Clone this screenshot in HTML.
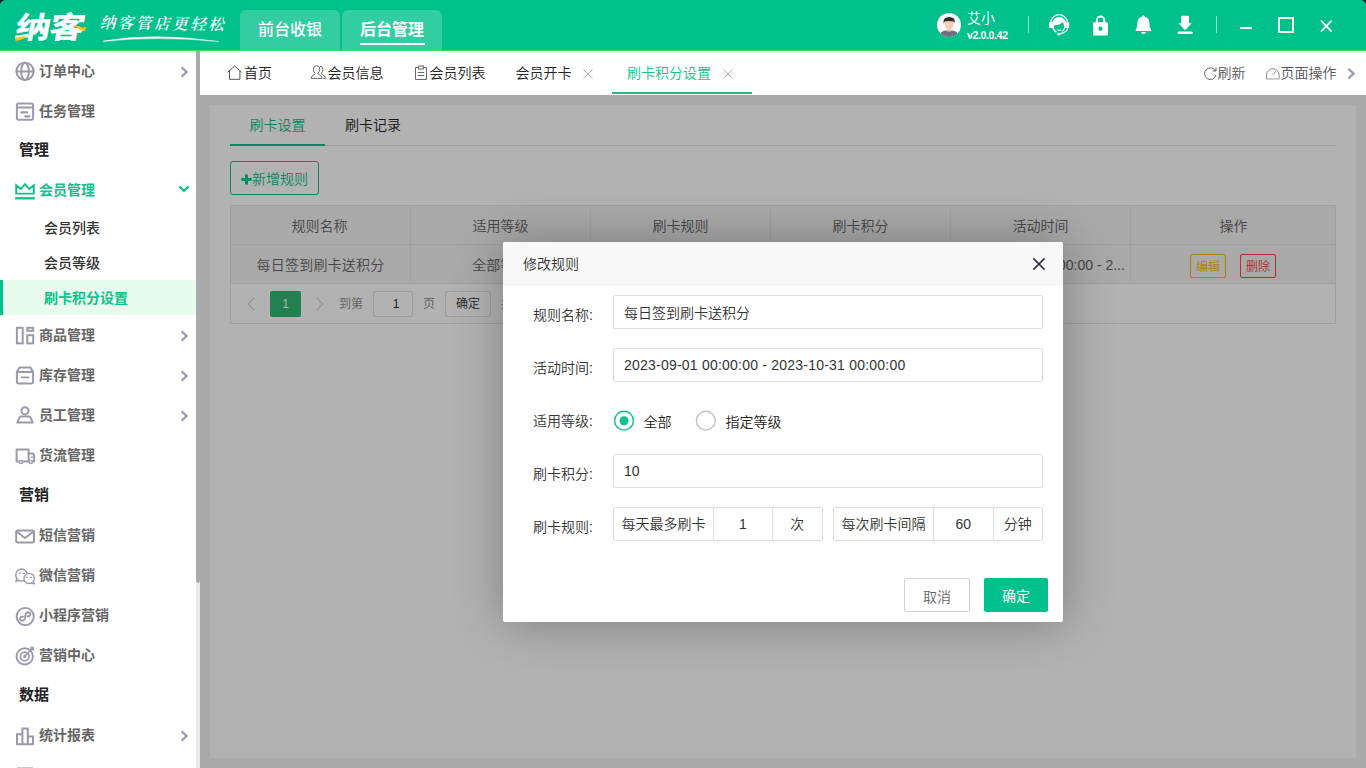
<!DOCTYPE html>
<html lang="zh-CN">
<head>
<meta charset="utf-8">
<title>纳客 - 刷卡积分设置</title>
<style>
*{box-sizing:border-box;margin:0;padding:0}
html,body{width:1366px;height:768px;overflow:hidden;background:#fff}
body{font-family:"Liberation Sans","Noto Sans CJK SC",sans-serif;font-size:14px;font-weight:350;color:#333;position:relative}
.abs{position:absolute}
/* ---------- header ---------- */
#hd{position:absolute;left:0;top:0;width:1366px;height:50px;background:#00c08b}
#hdline{position:absolute;left:0;top:50px;width:1366px;height:1px;background:#3fd673}
.corner{position:absolute;width:0;height:0}
.ntab{position:absolute;top:10px;height:40px;width:100px;background:#33cda2;border-radius:6px 6px 0 0;color:#fff;font-size:16px;line-height:40px;text-align:center}
/* ---------- sidebar ---------- */
#side{position:absolute;left:0;top:51px;width:196px;height:717px;background:#fff;overflow:hidden}
.mi{position:absolute;left:0;width:196px;height:40px;line-height:40px;font-size:14px;font-weight:700;color:#666}
.mi span{position:absolute;left:39px;top:0}
.mi svg.ic{position:absolute;left:14px;top:9px;width:22px;height:22px}
.mi svg.ar{position:absolute;left:179px;top:14.6px;width:10px;height:12px}
.grp{position:absolute;left:19px;font-size:15px;font-weight:700;color:#222;height:40px;line-height:40px}
.sub{position:absolute;left:0;width:196px;height:35px;line-height:36px;font-size:14px;font-weight:500;color:#333}
.sub span{position:absolute;left:44px}
#sbar{position:absolute;left:196px;top:51px;width:4px;height:717px;background:#e9e9e9}
#sthumb{position:absolute;left:0;top:0;width:4px;height:532px;background:#ababab;border-radius:0 0 2px 2px}
/* ---------- tab bar ---------- */
#tabs{position:absolute;left:200px;top:51px;width:1166px;height:44px;background:#fff}
.tb{position:absolute;top:0;height:44px;line-height:44px;font-size:14px;color:#222;white-space:nowrap}
/* ---------- content ---------- */
#content{position:absolute;left:200px;top:95px;width:1166px;height:673px;background:#f2f2f2;overflow:hidden}
#panel{position:absolute;left:10px;top:10px;width:1146px;height:653px;background:#fff}
#shade{position:absolute;left:0;top:0;width:1166px;height:673px;background:rgba(0,0,0,.3)}
/* ---------- modal ---------- */
#modal{position:absolute;left:303px;top:147px;width:560px;height:380px;background:#fff;box-shadow:1px 1px 50px rgba(0,0,0,.3);border-radius:2px}
#mtitle{position:absolute;left:0;top:0;width:560px;height:43px;background:#f8f8f8;border-bottom:1px solid #eee;line-height:44px;padding-left:20px;font-size:14px;color:#333;border-radius:2px 2px 0 0}
.lbl{position:absolute;left:30px;height:34px;line-height:34px;font-size:14px;color:#333;white-space:nowrap}
.inp{position:absolute;left:110px;width:430px;height:34px;border:1px solid #dedede;border-radius:2px;line-height:34px;padding-left:10px;font-size:14px;color:#333;background:#fff;white-space:nowrap}
.bx{position:absolute;top:265px;height:34px;border:1px solid #dedede;border-radius:2px;line-height:32px;text-align:center;font-size:14px;color:#333;background:#fff;white-space:nowrap}
</style>
</head>
<body>
<!-- HEADER -->
<div id="hd">
  <!-- logo -->
  <div class="abs" id="logo" style="left:16px;top:7px;width:62px;height:42px;font-family:'Liberation Sans','Noto Sans CJK SC',sans-serif;font-weight:700;font-size:29.5px;line-height:42px;color:#fff;letter-spacing:-1px;transform-origin:0 50%;transform:scaleX(1.185) skewX(-9deg);white-space:nowrap;-webkit-text-stroke:.5px #fff">纳客</div>
  <svg class="abs" style="left:0;top:0" width="100" height="50" viewBox="0 0 100 50">
    <path d="M15 37.4 Q20 37.6 25.6 35.8 L24.6 38.2 Q20 41 15.6 41 Z" fill="#ffc20e"/>
    <path d="M74 26 Q79 25.2 82.4 27.8 L86.2 26.8 L85.2 31 Q80.4 30.6 78 28.4 Q76 27 74 26 Z" fill="#ffc20e"/>
  </svg>
  <div class="abs" id="slogan" style="left:101px;top:10px;width:130px;height:26px;font-family:'Liberation Serif','Noto Serif CJK SC',serif;font-weight:600;font-size:15.5px;line-height:26px;color:#fff;letter-spacing:2.6px;transform-origin:0 50%;transform:rotate(1deg) skewX(-14deg);white-space:nowrap">纳客管店更轻松</div>
  <svg class="abs" style="left:100px;top:32px" width="130" height="12" viewBox="0 0 130 12">
    <path d="M3 9 Q55 0 119 9.6 Q55 3.6 3.4 9.6 Z" fill="#fff" stroke="#fff" stroke-width=".4"/>
  </svg>
  <!-- nav tabs -->
  <div class="ntab" style="left:240px;font-weight:500">前台收银</div>
  <div class="ntab" style="left:342px;font-weight:700">后台管理<i style="position:absolute;left:18px;top:33px;width:65px;height:2px;background:#fff"></i></div>
  <!-- user -->
  <svg class="abs" style="left:937px;top:13px" width="24" height="24" viewBox="0 0 24 24">
    <defs><clipPath id="avc"><circle cx="12" cy="12" r="12"/></clipPath></defs>
    <circle cx="12" cy="12" r="12" fill="#fff"/>
    <g clip-path="url(#avc)">
      <path d="M2.5 24 Q3 18.3 8 17.6 L16 17.6 Q21 18.3 21.5 24 Z" fill="#6d6e80"/>
      <rect x="10" y="14" width="4" height="4.5" fill="#f3c4a3"/>
      <ellipse cx="12" cy="11" rx="4.6" ry="5.2" fill="#f7cdb0"/>
      <path d="M6.6 10.5 Q5.8 5 10 4.6 Q12 3.2 15 4.6 Q18.6 5.6 17.4 10.5 L16.6 8.4 Q12 7.6 8 8.2 Z" fill="#2f2f33"/>
    </g>
  </svg>
  <div class="abs" style="left:967px;top:9px;font-size:14px;font-weight:400;line-height:18px;color:#fff;white-space:nowrap">艾小</div>
  <div class="abs" style="left:967px;top:29px;font-size:10.5px;line-height:12px;color:#fff;font-weight:700;letter-spacing:-.35px;white-space:nowrap">v2.0.0.42</div>
  <i class="abs" style="left:1028px;top:16px;width:1px;height:17px;background:rgba(255,255,255,.55)"></i>
  <!-- headset -->
  <svg class="abs" style="left:1047px;top:12px" width="24" height="26" viewBox="0 0 24 26">
    <path d="M3.9 9.7 A8.3 8.3 0 0 1 20.3 9.7" fill="none" stroke="#fff" stroke-width="1.3"/>
    <rect x="2" y="9.8" width="3.4" height="6.3" rx="1.2" fill="#fff"/>
    <rect x="19.2" y="9.8" width="2.9" height="6.3" rx="1.2" fill="#fff"/>
    <path d="M5 16 L5 12.2 A7.1 7.1 0 0 1 19.3 12.2 L19.3 16 L17.3 16 Q17.3 12.6 15.3 9.8 Q14.6 11.7 13 12.3 Q10 13.2 6.9 13.7 Q6.7 15 7 16 Z" fill="#fff"/>
    <path d="M5.8 15.6 Q6.6 18.6 9.4 20" fill="none" stroke="#fff" stroke-width="1.5"/>
    <path d="M17.7 15.4 Q17.4 17.6 15.4 19.2" fill="none" stroke="#fff" stroke-width="1.1"/>
    <path d="M10.4 17.8 Q12.3 19 14.3 17.8" fill="none" stroke="#fff" stroke-width="1.2"/>
    <path d="M20.7 15.6 Q20.6 20.4 13.2 21.6" fill="none" stroke="#fff" stroke-width="1.2"/>
    <ellipse cx="11.9" cy="22.1" rx="1.9" ry="1.4" fill="#fff"/>
  </svg>
  <!-- lock -->
  <svg class="abs" style="left:1090px;top:12px" width="22" height="26" viewBox="0 0 22 26">
    <path d="M6.9 11 V8.2 A3.7 3.7 0 0 1 14.3 8.2 V11" fill="none" stroke="#fff" stroke-width="2"/>
    <path d="M3 11.6 Q3 10.2 4.4 10.2 H16.6 Q18 10.2 18 11.6 V22 Q18 23.5 16.6 23.5 H4.4 Q3 23.5 3 22 Z M10.5 14.6 A2.1 2.1 0 1 0 10.5 18.8 A2.1 2.1 0 1 0 10.5 14.6 Z" fill="#fff" fill-rule="evenodd"/>
  </svg>
  <!-- bell -->
  <svg class="abs" style="left:1132px;top:12px" width="24" height="26" viewBox="0 0 24 26">
    <path d="M11.4 3.5 Q12.4 3.3 12.7 4.5 Q17.4 5.8 17.4 11.4 Q17.4 15.6 19.1 18 Q19.5 19 18.6 19 H4.2 Q3.3 19 3.7 18 Q5.4 15.6 5.4 11.4 Q5.4 5.8 10.1 4.5 Q10.4 3.3 11.4 3.5 Z" fill="#fff"/>
    <path d="M9 20 H14 Q13.6 22 11.5 22 Q9.4 22 9 20 Z" fill="#fff"/>
  </svg>
  <!-- download -->
  <svg class="abs" style="left:1174px;top:12px" width="22" height="26" viewBox="0 0 22 26">
    <path d="M7.2 4.6 Q7.2 3.8 8 3.8 H14.2 Q15 3.8 15 4.6 V11.2 H17.8 L11.1 18.3 L4.4 11.2 H7.2 Z" fill="#fff"/>
    <rect x="3.7" y="19.4" width="15" height="2.7" rx="1.2" fill="#fff"/>
  </svg>
  <i class="abs" style="left:1216px;top:16px;width:1px;height:17px;background:rgba(255,255,255,.55)"></i>
  <!-- window buttons -->
  <i class="abs" style="left:1240px;top:27px;width:12px;height:2px;background:#fff"></i>
  <i class="abs" style="left:1278px;top:17px;width:16px;height:16px;border:2px solid #fdffe2"></i>
  <svg class="abs" style="left:1318px;top:18px" width="16" height="16" viewBox="0 0 16 16"><path d="M3 2.6 L13.6 13.6 M13.6 2.6 L3 13.6" stroke="#fff" stroke-width="1.7" fill="none"/></svg>
  <!-- window corners -->
  <svg class="abs" style="left:0;top:0" width="5" height="5" viewBox="0 0 5 5"><path d="M0 0 H4.5 Q1 1 0 4.5 Z" fill="#2a1d2c"/></svg>
  <svg class="abs" style="left:1361px;top:0" width="5" height="5" viewBox="0 0 5 5"><path d="M5 0 H.5 Q4 1 5 4.5 Z" fill="#2a1d2c"/></svg>
</div>
<div id="hdline"></div>

<!-- SIDEBAR -->
<div id="side">
<div class="mi" style="top:0px"><svg class="ic" viewBox="0 0 22 22" fill="none" stroke="#9a9aab" stroke-width="2" stroke-linecap="round" stroke-linejoin="round"><circle cx="11" cy="11.4" r="8.6"/><ellipse cx="11" cy="11.4" rx="3.8" ry="8.6"/><path d="M2.6 11.4 H19.4"/></svg><span>订单中心</span><svg class="ar" viewBox="0 0 10 12" fill="none" stroke="#9a9aab" stroke-width="2.2"><path d="M2.6 1.4 L7.6 6 L2.6 10.6"/></svg></div>
<div class="mi" style="top:40px"><svg class="ic" viewBox="0 0 22 22" fill="none" stroke="#9a9aab" stroke-width="2" stroke-linecap="round" stroke-linejoin="round"><rect x="2.9" y="3.4" width="16.2" height="16.4" rx="1.8"/><path d="M3 7.4 H19"/><path d="M7.4 12.4 H13" stroke-width="2.3"/><path d="M11.2 16.3 H15.2" stroke-width="2.3"/></svg><span>任务管理</span></div>
<div class="grp" style="top:79px">管理</div>
<div class="mi" style="top:119px;color:#0fc28d"><svg class="ic" viewBox="0 0 22 22" fill="none" stroke="#9a9aab" stroke-width="2" stroke-linecap="round" stroke-linejoin="round"><g transform="translate(0,2.6)"><path d="M2.2 3.6 L2.2 12 H19.8 V3.6 L15.2 7.4 L11 2.6 L6.8 7.4 Z" stroke="#0fc28d" stroke-width="1.9" stroke-linejoin="miter"/><path d="M1.2 16.7 H20.8" stroke="#0fc28d" stroke-width="2.4" stroke-linecap="butt"/></g></svg><span>会员管理</span><svg class="ar" style="left:178px;top:14px;width:12px;height:10px" viewBox="0 0 12 10" fill="none" stroke="#0fc28d" stroke-width="2.2"><path d="M1.4 2.4 L6 7 L10.6 2.4"/></svg></div>
<div class="sub" style="top:159px"><span>会员列表</span></div>
<div class="sub" style="top:194px"><span>会员等级</span></div>
<div class="sub" style="top:229px;background:#e7fcec;color:#0fc28d;font-weight:700"><i style="position:absolute;left:0;top:0;width:3px;height:35px;background:#00c08b"></i><span>刷卡积分设置</span></div>
<div class="mi" style="top:264px"><svg class="ic" viewBox="0 0 22 22" fill="none" stroke="#9a9aab" stroke-width="2" stroke-linecap="round" stroke-linejoin="round"><rect x="2.9" y="3.8" width="5.8" height="15.6" stroke-linejoin="miter"/><rect x="13.3" y="3.8" width="5.9" height="3" stroke-linejoin="miter"/><rect x="13.3" y="11.2" width="5.9" height="8.2" stroke-linejoin="miter"/></svg><span>商品管理</span><svg class="ar" viewBox="0 0 10 12" fill="none" stroke="#9a9aab" stroke-width="2.2"><path d="M2.6 1.4 L7.6 6 L2.6 10.6"/></svg></div>
<div class="mi" style="top:304px"><svg class="ic" viewBox="0 0 22 22" fill="none" stroke="#9a9aab" stroke-width="2" stroke-linecap="round" stroke-linejoin="round"><path d="M5.6 3.4 H16.4 L19.2 8 H2.8 Z"/><path d="M2.9 8 V17.4 Q2.9 19.4 4.9 19.4 H17.1 Q19.1 19.4 19.1 17.4 V8"/><path d="M7.6 13.4 H14.4" stroke-width="1.9"/></svg><span>库存管理</span><svg class="ar" viewBox="0 0 10 12" fill="none" stroke="#9a9aab" stroke-width="2.2"><path d="M2.6 1.4 L7.6 6 L2.6 10.6"/></svg></div>
<div class="mi" style="top:344px"><svg class="ic" viewBox="0 0 22 22" fill="none" stroke="#9a9aab" stroke-width="2" stroke-linecap="round" stroke-linejoin="round"><circle cx="11" cy="6.8" r="3.6"/><path d="M3.2 18.6 L5.6 13.4 Q6 12.6 7 12.6 H15 Q16 12.6 16.4 13.4 L18.8 18.6 Z"/></svg><span>员工管理</span><svg class="ar" viewBox="0 0 10 12" fill="none" stroke="#9a9aab" stroke-width="2.2"><path d="M2.6 1.4 L7.6 6 L2.6 10.6"/></svg></div>
<div class="mi" style="top:384px"><svg class="ic" viewBox="0 0 22 22" fill="none" stroke="#9a9aab" stroke-width="2" stroke-linecap="round" stroke-linejoin="round"><path d="M5.2 17.6 H2.6 V5.6 H14.6 V17.6 H8.8"/><path d="M14.6 9.6 H18 Q20.2 9.8 20.2 12.6 V17.6 H18.6 M14.6 17.6 H15"/><circle cx="7" cy="18" r="1.6" stroke-width="1.4"/><circle cx="16.8" cy="18" r="1.6" stroke-width="1.4"/><path d="M17.2 13.2 H19.6" stroke-width="1.3"/></svg><span>货流管理</span></div>
<div class="grp" style="top:424px">营销</div>
<div class="mi" style="top:464px"><svg class="ic" viewBox="0 0 22 22" fill="none" stroke="#9a9aab" stroke-width="2" stroke-linecap="round" stroke-linejoin="round"><rect x="2.2" y="6.6" width="17.8" height="11.8" rx="1.6"/><path d="M2.8 7.8 L11 14 L19.4 7.8"/></svg><span>短信营销</span></div>
<div class="mi" style="top:504px"><svg class="ic" viewBox="0 0 22 22" fill="none" stroke="#9a9aab" stroke-width="2" stroke-linecap="round" stroke-linejoin="round"><ellipse cx="7.55" cy="11.05" rx="5.8" ry="6" stroke-width="1.4"/><path d="M2.9 14.8 L1.7 17.6 L4.9 16.5" stroke-width="1.3" fill="#fff"/><ellipse cx="15.15" cy="14.45" rx="5.2" ry="5.1" stroke-width="1.4" fill="#fff"/><path d="M19.3 17.8 L20.5 19.9 L17.5 19.3" stroke-width="1.3" fill="#fff"/><path d="M5.2 9.3 H6.6 M9.2 9.3 H10.6 M12.2 13.3 H13.6 M16.2 13.3 H17.6" stroke-width="1.2"/></svg><span>微信营销</span></div>
<div class="mi" style="top:544px"><svg class="ic" viewBox="0 0 22 22" fill="none" stroke="#9a9aab" stroke-width="2" stroke-linecap="round" stroke-linejoin="round"><circle cx="11.2" cy="12.5" r="8.6" stroke-width="1.9"/><path d="M8.9 12.7 Q6.1 12.5 6 14.7 Q6.1 16.8 8.3 16.8 Q10.6 16.6 10.9 14 L11.5 11 Q11.8 8.4 14.1 8.2 Q16.3 8.2 16.4 10.3 Q16.3 12.5 13.5 12.3" stroke-width="1.9"/></svg><span>小程序营销</span></div>
<div class="mi" style="top:584px"><svg class="ic" viewBox="0 0 22 22" fill="none" stroke="#9a9aab" stroke-width="2" stroke-linecap="round" stroke-linejoin="round"><circle cx="10.7" cy="12.4" r="8.15" stroke-width="1.9"/><circle cx="10.7" cy="12.4" r="4.3" stroke-width="1.8"/><circle cx="10.7" cy="12.4" r="1.7" fill="#9a9aab" stroke="none"/><path d="M11 12 L18.8 4" stroke-width="1.6"/><path d="M16.4 3.4 L17.4 5.6 L19.6 6.4 L19.4 3.4 Z" fill="#9a9aab" stroke-width=".8"/></svg><span>营销中心</span></div>
<div class="grp" style="top:624px">数据</div>
<div class="mi" style="top:664px"><svg class="ic" viewBox="0 0 22 22" fill="none" stroke="#9a9aab" stroke-width="2" stroke-linecap="round" stroke-linejoin="round"><path d="M3 20.2 V10.2 H8.4 V20.2 M8.4 10.2 V4.6 H13.8 V20.2 M13.8 12.6 H19 V20.2 M3 20.2 H19" stroke-linejoin="miter"/></svg><span>统计报表</span><svg class="ar" viewBox="0 0 10 12" fill="none" stroke="#9a9aab" stroke-width="2.2"><path d="M2.6 1.4 L7.6 6 L2.6 10.6"/></svg></div>
<i style="position:absolute;left:17px;top:716px;width:16px;height:2px;background:#c9c9d3"></i>
</div>
<div id="sbar"><div id="sthumb"></div></div>

<!-- TAB BAR -->
<div id="tabs">
  <svg class="abs" style="left:26px;top:13px" width="18" height="18" viewBox="0 0 18 18" fill="none" stroke="#555" stroke-width="1"><path d="M1.8 8.2 L8.7 1.9 L15.6 8.2 M3.5 7 V15.3 H13.9 V7"/></svg>
  <div class="tb" style="left:44px">首页</div>
  <svg class="abs" style="left:110px;top:13px" width="18" height="18" viewBox="0 0 18 18" fill="none" stroke="#666" stroke-width="1"><path d="M6.6 1.6 Q9.8 1.6 9.8 5.2 Q9.8 8 8 9.2 Q8 10.4 9.6 11 Q12 11.8 12.2 14.4 H1.2 Q1.4 11.8 3.6 11 Q5.2 10.4 5.2 9.2 Q3.4 8 3.4 5.2 Q3.4 1.6 6.6 1.6 Z"/><path d="M10 2.2 Q12.8 2 12.8 5.4 Q12.8 8 11.2 9.2 Q11.2 10.2 12.8 10.8 Q15.2 11.6 15.4 14.4 H13.4"/></svg>
  <div class="tb" style="left:127.5px">会员信息</div>
  <svg class="abs" style="left:214px;top:13px" width="16" height="18" viewBox="0 0 16 18" fill="none" stroke="#666" stroke-width="1"><path d="M4.6 3.5 H1.5 V15.5 H12.5 V3.5 H9.4"/><rect x="4.6" y="2" width="4.8" height="3"/><path d="M3.8 8.5 H10.2 M3.8 11.5 H10.2"/></svg>
  <div class="tb" style="left:229.5px">会员列表</div>
  <div class="tb" style="left:315.5px">会员开卡</div>
  <svg class="abs" style="left:382px;top:17px" width="12" height="12" viewBox="0 0 12 12" fill="none" stroke="#b5b5b5" stroke-width="1"><path d="M1.5 1.5 L10.5 10.5 M10.5 1.5 L1.5 10.5"/></svg>
  <div class="tb" style="left:427px;color:#0fc28d">刷卡积分设置</div>
  <svg class="abs" style="left:522px;top:17px" width="12" height="12" viewBox="0 0 12 12" fill="none" stroke="#b5b5b5" stroke-width="1"><path d="M1.5 1.5 L10.5 10.5 M10.5 1.5 L1.5 10.5"/></svg>
  <i class="abs" style="left:412px;top:41px;width:140px;height:2px;background:#1fbe7c"></i>
  <!-- right tools -->
  <svg class="abs" style="left:1003px;top:15px" width="15" height="15" viewBox="0 0 15 15" fill="none" stroke="#666" stroke-width="1"><path d="M12.6 5.2 A5.8 5.8 0 1 0 13 9"/><path d="M9.6 4.9 H13 V1.5" stroke-linejoin="miter"/></svg>
  <div class="tb" style="left:1017.5px;color:#555">刷新</div>
  <svg class="abs" style="left:1065px;top:15px" width="16" height="15" viewBox="0 0 16 15" fill="none" stroke="#888" stroke-width="1"><path d="M1.5 12.4 V9 A6.3 6.3 0 0 1 14.1 9 V12.4"/><path d="M1 12.9 H14.6" stroke="#aaa" stroke-width="1.2"/><path d="M7.6 9 L10.8 5.2"/></svg>
  <div class="tb" style="left:1080.5px;color:#555">页面操作</div>
  <svg class="abs" style="left:1146px;top:16px" width="10" height="13" viewBox="0 0 10 13" fill="none" stroke="#9a9aab" stroke-width="2.2"><path d="M2.4 1.8 L7.6 6.6 L2.4 11.4"/></svg>
</div>

<!-- CONTENT -->
<div id="content">
  <div id="panel">
<div class="abs" style="left:20px;top:0;width:95px;height:40px;line-height:41px;text-align:center;color:#0fc28d;font-size:14px">刷卡设置</div>
<div class="abs" style="left:115px;top:0;width:96px;height:40px;line-height:41px;text-align:center;color:#222;font-size:14px">刷卡记录</div>
<i class="abs" style="left:20px;top:40px;width:1106px;height:1px;background:#e6e6e6"></i>
<i class="abs" style="left:20px;top:39px;width:95px;height:2px;background:#0fc28d"></i>
<div class="abs" style="left:20px;top:56px;width:89px;height:34px;border:1px solid #0fc28d;border-radius:3px;color:#0fc28d;font-size:14px;line-height:34px;white-space:nowrap"><svg class="abs" style="left:10px;top:12px" width="11" height="11" viewBox="0 0 11 11"><path d="M4 .4 H7 V4 H10.6 V7 H7 V10.6 H4 V7 H.4 V4 H4 Z" fill="#0fc28d"/></svg><span class="abs" style="left:21px;top:0">新增规则</span></div>
<div class="abs" id="tbl" style="left:20px;top:100px;width:1106px;height:119px;border:1px solid #e6e6e6">
<div class="abs" style="left:0;top:0;width:1104px;height:38px;background:#f2f2f2"></div>
<div class="abs" style="left:0;top:38px;width:1104px;height:1px;background:#e6e6e6"></div>
<div class="abs" style="left:0;top:39px;width:1104px;height:38px;background:#f2f2f2"></div>
<div class="abs" style="left:0;top:77px;width:1104px;height:1px;background:#e6e6e6"></div>
<i class="abs" style="left:179px;top:0;width:1px;height:77px;background:#e6e6e6"></i>
<div class="abs" style="left:-1px;top:0;width:179px;height:39px;line-height:40px;text-align:center;color:#666;font-size:14px">规则名称</div>
<div class="abs" style="left:15px;top:40px;width:149px;height:38px;line-height:39px;text-align:center;color:#666;font-size:14px;white-space:nowrap;overflow:hidden;text-overflow:ellipsis;letter-spacing:.2px">每日签到刷卡送积分</div>
<i class="abs" style="left:359px;top:0;width:1px;height:77px;background:#e6e6e6"></i>
<div class="abs" style="left:180px;top:0;width:179px;height:39px;line-height:40px;text-align:center;color:#666;font-size:14px">适用等级</div>
<div class="abs" style="left:195px;top:40px;width:149px;height:38px;line-height:39px;text-align:center;color:#666;font-size:14px;white-space:nowrap;overflow:hidden;text-overflow:ellipsis;letter-spacing:.2px">全部等级</div>
<i class="abs" style="left:539px;top:0;width:1px;height:77px;background:#e6e6e6"></i>
<div class="abs" style="left:360px;top:0;width:179px;height:39px;line-height:40px;text-align:center;color:#666;font-size:14px">刷卡规则</div>
<div class="abs" style="left:375px;top:40px;width:149px;height:38px;line-height:39px;text-align:center;color:#666;font-size:14px;white-space:nowrap;overflow:hidden;text-overflow:ellipsis;letter-spacing:.2px">每天最多刷卡1次，间隔60分钟</div>
<i class="abs" style="left:719px;top:0;width:1px;height:77px;background:#e6e6e6"></i>
<div class="abs" style="left:540px;top:0;width:179px;height:39px;line-height:40px;text-align:center;color:#666;font-size:14px">刷卡积分</div>
<div class="abs" style="left:555px;top:40px;width:149px;height:38px;line-height:39px;text-align:center;color:#666;font-size:14px;white-space:nowrap;overflow:hidden;text-overflow:ellipsis;letter-spacing:.2px">10</div>
<i class="abs" style="left:899px;top:0;width:1px;height:77px;background:#e6e6e6"></i>
<div class="abs" style="left:720px;top:0;width:179px;height:39px;line-height:40px;text-align:center;color:#666;font-size:14px">活动时间</div>
<div class="abs" style="left:732px;top:39px;width:160px;height:38px;line-height:40px;text-align:right;color:#666;font-size:14px;white-space:nowrap">2023-09-01 00:00:00 - 2...</div>
<div class="abs" style="left:900px;top:0;width:205px;height:39px;line-height:40px;text-align:center;color:#666;font-size:14px">操作</div>
<div class="abs" style="left:959px;top:48px;width:36px;height:24px;border:1px solid #ffb800;border-radius:2px;color:#ffb800;font-size:12px;line-height:25px;text-align:center">编辑</div>
<div class="abs" style="left:1009px;top:48px;width:36px;height:24px;border:1px solid #ff4545;border-radius:2px;color:#ff4545;font-size:12px;line-height:25px;text-align:center">删除</div>
<svg class="abs" style="left:15px;top:90px" width="10" height="16" viewBox="0 0 10 16" fill="none" stroke="#d2d2d2" stroke-width="1.2"><path d="M8 2 L2.4 8 L8 14"/></svg>
<div class="abs" style="left:39px;top:85px;width:31px;height:26px;background:#33b873;border-radius:2px;color:#fff;font-size:12px;line-height:26px;text-align:center;font-weight:400">1</div>
<svg class="abs" style="left:84px;top:90px" width="10" height="16" viewBox="0 0 10 16" fill="none" stroke="#d2d2d2" stroke-width="1.2"><path d="M2 2 L7.6 8 L2 14"/></svg>
<div class="abs" style="left:108px;top:85px;height:26px;line-height:26px;font-size:12px;color:#888;white-space:nowrap">到第</div>
<div class="abs" style="left:142px;top:85px;width:40px;height:26px;border:1px solid #e2e2e2;border-radius:2px;line-height:24px;font-size:12px;color:#333;text-align:center;padding-left:6px">1</div>
<div class="abs" style="left:192px;top:85px;height:26px;line-height:26px;font-size:12px;color:#888">页</div>
<div class="abs" style="left:214px;top:85px;width:46px;height:26px;border:1px solid #e2e2e2;border-radius:2px;line-height:24px;font-size:12px;color:#333;text-align:center">确定</div>
<div class="abs" style="left:270px;top:85px;height:26px;line-height:26px;font-size:12px;color:#888;white-space:nowrap">共 1 条</div>
<div class="abs" style="left:322px;top:85px;width:80px;height:26px;border:1px solid #e2e2e2;border-radius:2px;line-height:24px;font-size:12px;color:#333;padding-left:8px">10 条/页</div>
</div>
</div>
  <div id="shade"></div>
  <div id="modal">
    <div id="mtitle">修改规则</div>
    <svg class="abs" style="left:529px;top:15px" width="14" height="14" viewBox="0 0 14 14" fill="none" stroke="#2b2b45" stroke-width="1.5"><path d="M1.4 1.4 L12.6 12.6 M12.6 1.4 L1.4 12.6"/></svg>
    <div class="lbl" style="top:56px">规则名称:</div>
    <div class="lbl" style="top:109px">活动时间:</div>
    <div class="lbl" style="top:162px">适用等级:</div>
    <div class="lbl" style="top:215px">刷卡积分:</div>
    <div class="lbl" style="top:268px">刷卡规则:</div>
    <div class="inp" style="top:53px">每日签到刷卡送积分</div>
    <div class="inp" style="top:106px;letter-spacing:.22px;line-height:33px">2023-09-01 00:00:00 - 2023-10-31 00:00:00</div>
    <svg class="abs" style="left:110px;top:168px" width="22" height="22" viewBox="0 0 22 22"><circle cx="11" cy="10.7" r="9.4" fill="#fff" stroke="#0fc28d" stroke-width="1.4"/><circle cx="11" cy="10.7" r="4.5" fill="#0fc28d"/></svg>
    <div class="abs" style="left:140.5px;top:166px;height:28px;line-height:28px;font-size:14px;color:#222;white-space:nowrap">全部</div>
    <svg class="abs" style="left:192px;top:168px" width="22" height="22" viewBox="0 0 22 22"><circle cx="10.8" cy="10.7" r="9.4" fill="#fff" stroke="#c2c2c2" stroke-width="1.4"/></svg>
    <div class="abs" style="left:222.5px;top:166px;height:28px;line-height:28px;font-size:14px;color:#222;white-space:nowrap">指定等级</div>
    <div class="inp" style="top:212px;line-height:33px">10</div>
    <div class="bx" style="left:110px;width:101px">每天最多刷卡</div>
    <div class="bx" style="left:210px;width:60px">1</div>
    <div class="bx" style="left:269px;width:50.5px">次</div>
    <div class="bx" style="left:330px;width:101px">每次刷卡间隔</div>
    <div class="bx" style="left:430px;width:60.5px">60</div>
    <div class="bx" style="left:489.5px;width:50.5px">分钟</div>
    <div class="abs" style="left:401px;top:336px;width:66px;height:34px;border:1px solid #d2d2d2;border-radius:2px;background:#fff;color:#666;font-size:14px;line-height:36px;text-align:center">取消</div>
    <div class="abs" style="left:481px;top:336px;width:64px;height:34px;border-radius:2px;background:#00c08b;color:#fff;font-size:14px;line-height:36px;text-align:center;font-weight:400">确定</div>
  </div>
</div>
</body>
</html>
